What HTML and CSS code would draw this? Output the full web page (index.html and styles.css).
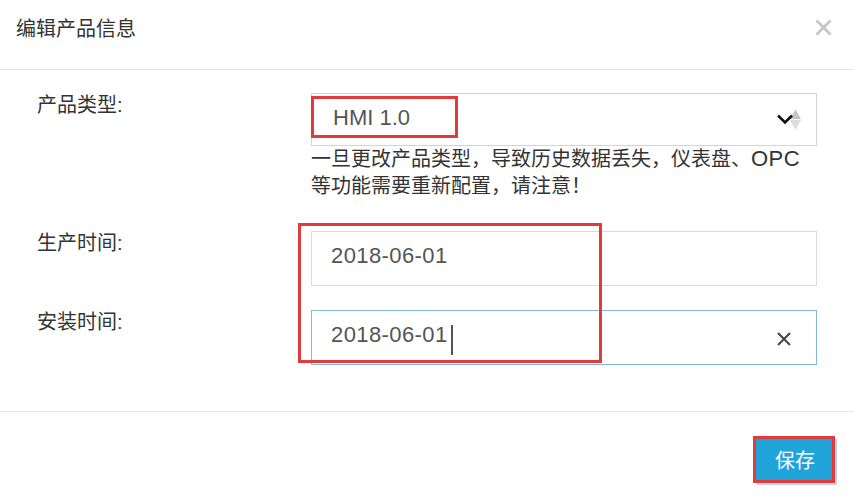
FILE: index.html
```html
<!DOCTYPE html>
<html lang="zh">
<head>
<meta charset="utf-8">
<title>编辑产品信息</title>
<link rel="stylesheet" href="styles.css">
</head>
<body>
<div class="modal">
  <div class="modal-header">
    <div class="modal-title">编辑产品信息</div>
    <svg class="close-icon" width="17" height="17" viewBox="0 0 17 17"><path d="M1.5 1.5 L15.5 15.5 M15.5 1.5 L1.5 15.5" stroke="#c6c6c6" stroke-width="2.8" fill="none"/></svg>
  </div>
  <div class="modal-body">
    <div class="form-row">
      <div class="form-label">产品类型:</div>
      <div class="form-control">
        <div class="select">
          <span class="select-value">HMI 1.0</span>
          <svg class="select-arrow" width="24" height="22" viewBox="0 0 24 22">
            <path d="M13 10 L18.5 0.5 L24 10 Z" fill="#c4c4c4"/>
            <path d="M13 11 L18.5 21 L24 11 Z" fill="#dcdcdc"/>
            <path d="M1 6.5 L8 13.5 L15 6.5" stroke="#111" stroke-width="2.6" fill="none"/>
          </svg>
        </div>
        <div class="help-text">一旦更改产品类型，导致历史数据丢失，仪表盘、<span class="latin">OPC</span><br>等功能需要重新配置，请注意！</div>
      </div>
    </div>
    <div class="form-row row-gap-lg">
      <div class="form-label">生产时间:</div>
      <div class="form-control">
        <div class="input"><span class="input-value">2018-06-01</span></div>
      </div>
    </div>
    <div class="form-row row-gap-sm">
      <div class="form-label">安装时间:</div>
      <div class="form-control">
        <div class="input input-focus">
          <span class="input-value">2018-06-01</span><span class="caret"></span>
          <svg class="clear-icon" width="14" height="14" viewBox="0 0 14 14"><path d="M1 1 L13 13 M13 1 L1 13" stroke="#444" stroke-width="2" fill="none"/></svg>
        </div>
      </div>
    </div>
  </div>
  <div class="modal-footer">
    <button class="btn-save">保存</button>
  </div>
</div>
<div class="mark mark-hmi"></div>
<div class="mark mark-dates"></div>
<div class="mark mark-save"></div>
</body>
</html>
```
FILE: styles.css
```css
* { box-sizing: border-box; }
html, body {
  margin: 0;
  padding: 0;
  background: #fff;
}
body {
  position: relative;
  width: 854px;
  height: 497px;
  overflow: hidden;
  font-family: "Liberation Sans", "Noto Sans CJK SC", sans-serif;
  color: #333;
}
.modal {
  display: flex;
  flex-direction: column;
  height: 497px;
}
.modal-header {
  height: 70px;
  border-bottom: 1px solid #e6e6e6;
  display: flex;
  justify-content: space-between;
  align-items: flex-start;
  padding: 17px 22px 0 16px;
}
.modal-title {
  font-size: 20px;
  line-height: 24px;
  color: #333;
}
.close-icon {
  margin-top: 2px;
}
.modal-body {
  padding: 23px 0 46px 37px;
}
.form-row {
  display: flex;
  align-items: flex-start;
}
.row-gap-lg { margin-top: 31px; }
.row-gap-sm { margin-top: 24px; }
.form-label {
  width: 274px;
  font-size: 20px;
  line-height: 24px;
  color: #333;
}
.form-control {
  width: 506px;
}
.select {
  height: 53px;
  border: 1px solid #d4d4d4;
  display: flex;
  align-items: center;
  justify-content: space-between;
  padding: 0 15px 4px 21px;
}
.select-value {
  font-size: 22px;
  color: #555;
}
.select-arrow {
  margin-top: 4px;
}
.help-text {
  font-size: 20px;
  line-height: 27px;
  height: 54px;
  color: #333;
  white-space: nowrap;
}
.help-text .latin {
  font-size: 22px;
  line-height: 1;
  letter-spacing: 0.5px;
}
.input {
  height: 55px;
  border: 1px solid #dcdcdc;
  display: flex;
  align-items: center;
  padding: 0 25px 5px 19px;
}
.input-focus {
  border-color: #86b7e2;
}
.input-value {
  font-size: 22px;
  letter-spacing: 0.4px;
  color: #555;
}
.caret {
  display: inline-block;
  width: 2px;
  height: 30px;
  background: #555;
  margin-left: 3px;
  margin-top: 10px;
}
.clear-icon {
  margin-left: auto;
  margin-top: 7px;
}
.modal-footer {
  flex: 1;
  border-top: 1px solid #e6e6e6;
  display: flex;
  justify-content: flex-end;
  align-items: flex-start;
  padding: 25px 19px 0 0;
}
.btn-save {
  width: 80px;
  height: 46px;
  background: #20a3d8;
  border: 1px solid #62b8e0;
  box-shadow: 2px 2px 0 #b3d9ec;
  color: #fff;
  font-family: "Liberation Sans", "Noto Sans CJK SC", sans-serif;
  font-size: 20px;
  padding: 0 0 2px 0;
}
.mark {
  position: absolute;
  border: 3px solid #e23b3e;
  pointer-events: none;
}
.mark-hmi {
  left: 311px;
  top: 96px;
  width: 147px;
  height: 42px;
}
.mark-dates {
  left: 298px;
  top: 223px;
  width: 304px;
  height: 140px;
}
.mark-save {
  left: 753px;
  top: 436px;
  width: 82px;
  height: 47px;
}
```
